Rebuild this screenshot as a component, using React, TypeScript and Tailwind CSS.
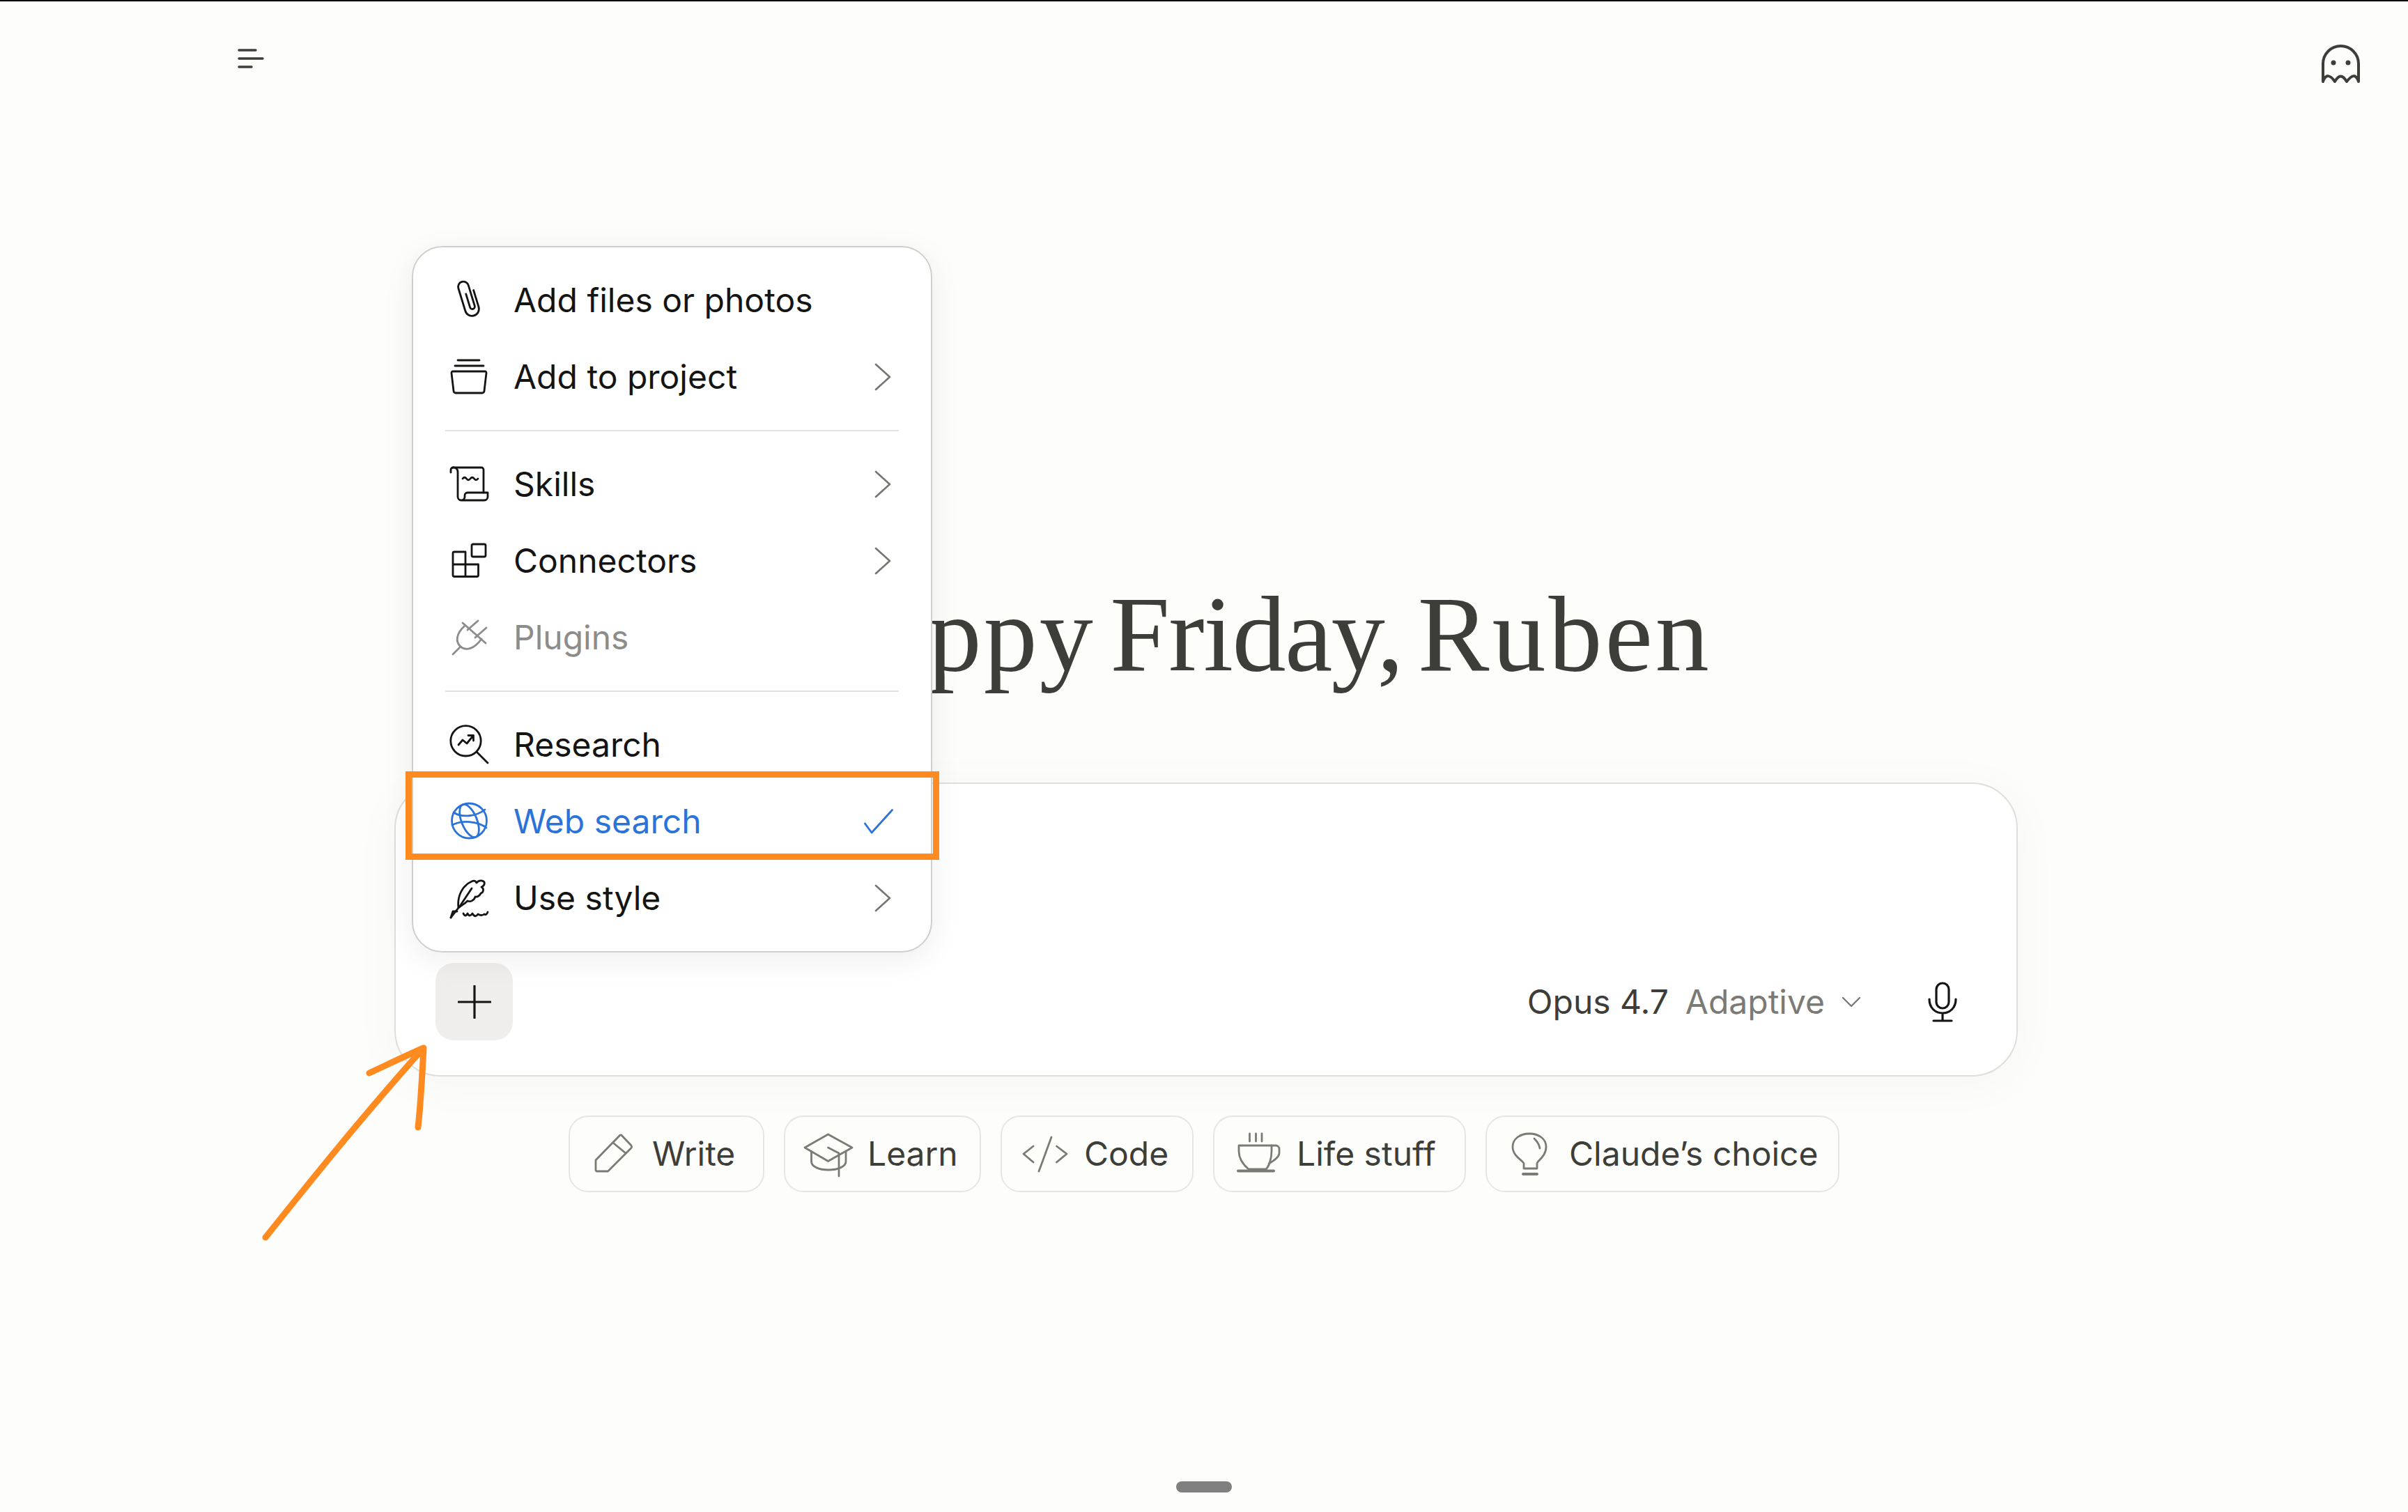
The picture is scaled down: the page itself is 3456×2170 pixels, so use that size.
import type { ReactNode } from 'react'

function Icon({ children, className = 'text-[#141413]' }: { children: ReactNode; className?: string }) {
  return (
    <svg width="64" height="64" viewBox="0 0 64 64" fill="none" stroke="currentColor" strokeWidth="2.8" strokeLinecap="round" strokeLinejoin="round" className={`shrink-0 overflow-visible ${className}`}>
      {children}
    </svg>
  )
}

function Chevron() {
  return (
    <svg width="24" height="40" viewBox="0 0 24 40" fill="none" stroke="#757572" strokeWidth="2.6" strokeLinecap="round" strokeLinejoin="round" className="shrink-0">
      <path d="M2 2 L22 20 L2 38" />
    </svg>
  )
}

type MenuItem = {
  label: string
  icon: ReactNode
  chevron?: boolean
  disabled?: boolean
}

const groupOne: MenuItem[] = [
  {
    label: 'Add files or photos',
    icon: (
      <g transform="rotate(-17 32 30)">
        <path d="M42 20V45a10 10 0 0 1-20 0V11a7.5 7.5 0 0 1 15 0V42a3.5 3.5 0 0 1-7 0V22" />
      </g>
    ),
  },
  {
    label: 'Add to project',
    chevron: true,
    icon: (
      <>
        <path d="M16 8H47M12 16H53" />
        <path d="M9 24H55a2 2 0 0 1 2 2.3L54 52a3 3 0 0 1-3 3H13a3 3 0 0 1-3-3L7 26.3a2 2 0 0 1 2-2.3Z" />
      </>
    ),
  },
]

const groupTwo: MenuItem[] = [
  {
    label: 'Skills',
    chevron: true,
    icon: (
      <>
        <path d="M6 15V11a3 3 0 0 1 3-3H50a3 3 0 0 1 3 3V44" />
        <path d="M9 8a6 6 0 0 1 7 6V50a5 5 0 0 0 5 5H54a5 5 0 0 0 5-5V44H30a4 4 0 0 0-4 4V50a5 5 0 0 1-5 5" />
        <path d="M23 24q2.8-3.5 5.5 0t5.5 0t5.5 0t5.5 0" />
      </>
    ),
  },
  {
    label: 'Connectors',
    chevron: true,
    icon: (
      <>
        <rect x="36" y="8" width="20" height="18" rx="2" />
        <path d="M9 21a2 2 0 0 1 2-2H27V54.5H11a2 2 0 0 1-2-2ZM9 37H45.5V52.5a2 2 0 0 1-2 2H27" />
      </>
    ),
  },
  {
    label: 'Plugins',
    disabled: true,
    icon: (
      <>
        <path d="M23 11L56 40" />
        <path d="M26 15C14 26 12 38 20 45C28 52 40 48 50 34" />
        <path d="M9 56L20 45M30 21L45 8M41 32L57 18" />
      </>
    ),
  },
]

const groupThree: MenuItem[] = [
  {
    label: 'Research',
    icon: (
      <>
        <circle cx="27.5" cy="26.3" r="21.7" />
        <path d="M43 42L59 58" />
        <path d="M17 32L23 25L29 30L38 19M31 18.5H38.5V26" />
      </>
    ),
  },
]

const chips: { label: string; width: string; icon: ReactNode }[] = [
  {
    label: 'Write',
    width: 'w-[281px]',
    icon: (
      <>
        <path d="M7 41L41.5 5.5a2 2 0 0 1 3.2.5L58 20a3 3 0 0 1 0 3.5L24.5 57H9a2 2 0 0 1-2-2Z" />
        <path d="M33 17L50 31" />
      </>
    ),
  },
  {
    label: 'Learn',
    width: 'w-[283px]',
    icon: (
      <>
        <path d="M31.5 4L66 23L31.5 42.5L-2 23Z" />
        <path d="M7.5 29V43C7.5 50 18 55 32 55S57 50 57 43V29" />
        <path d="M31.5 23L47 31V64" />
      </>
    ),
  },
  {
    label: 'Code',
    width: 'w-[277px]',
    icon: <path d="M15 21L1 32L15 44M48.5 21L63 32L48.5 44M41 8L23 57" />,
  },
  {
    label: 'Life stuff',
    width: 'w-[363px]',
    icon: (
      <>
        <path d="M20.5 3V14M29.5 3V14M38 3V14" />
        <path d="M5 20H52V28C52 40 48 50 44 54H19C12 48 5 40 5 28Z" />
        <path d="M52 20H58a5 5 0 0 1 5 5V31C63 36 55 42 48 46" />
        <path d="M4 56.5H55" strokeWidth="4" />
      </>
    ),
  },
  {
    label: 'Claude’s choice',
    width: 'w-[508px]',
    icon: (
      <>
        <path d="M23 53V46C23 42 7 36 7 22C7 10 18 3 31 3C44 3 55 10 55 22C55 36 42 42 42 46V53Z" />
        <path d="M38 10C42 14 45 18 46 24" />
        <path d="M22 61H42" strokeWidth="4" />
      </>
    ),
  },
]

function MenuRow({ item }: { item: MenuItem }) {
  return (
    <div className={`flex h-[110px] items-center pl-[48px] pr-[57px] ${item.disabled ? 'text-[#8c8c8a]' : 'text-[#141413]'}`}>
      <Icon className={item.disabled ? 'text-[#8c8c8a]' : 'text-[#141413]'}>{item.icon}</Icon>
      <span className="ml-[32px] flex-1 text-[48px] leading-none">{item.label}</span>
      {item.chevron && <Chevron />}
    </div>
  )
}

function Divider() {
  return <div className="mx-[46px] my-[21px] h-[2px] bg-[#e3e3df]" />
}

function PlusMenu() {
  return (
    <div className="absolute bottom-[176px] left-[23px] z-10 w-[747px] rounded-[44px] border-2 border-[#cfcfcb] bg-white py-[21px] shadow-[0_10px_44px_rgba(0,0,0,0.07)]">
      {groupOne.map((item) => <MenuRow key={item.label} item={item} />)}
      <Divider />
      {groupTwo.map((item) => <MenuRow key={item.label} item={item} />)}
      <Divider />
      {groupThree.map((item) => <MenuRow key={item.label} item={item} />)}

      {/* web search is the one that is switched on */}
      <div className="relative flex h-[110px] items-center pl-[48px] pr-[54px] text-[#2b73d9]">
        <Icon className="text-[#2b73d9]">
          <circle cx="32.5" cy="31" r="25" />
          <ellipse cx="32.5" cy="31" rx="11" ry="25" transform="rotate(-22 32.5 31)" />
          <path d="M10 19C22 27 42 25 55 15M8 37C22 30 44 31 57 41" />
        </Icon>
        <span className="ml-[32px] flex-1 text-[48px] leading-none">Web search</span>
        <svg width="42" height="36" viewBox="0 0 42 36" fill="none" stroke="currentColor" strokeWidth="2.8" strokeLinecap="round" strokeLinejoin="round">
          <path d="M1.5 21L11 34L40.5 1.5" />
        </svg>
        <div className="pointer-events-none absolute bottom-0 -left-[11px] -right-[12px] -top-[17px] border-[9px] border-[#ff8a1f]" />
      </div>

      <MenuRow
        item={{
          label: 'Use style',
          chevron: true,
          icon: (
            <>
              <path d="M17 46C15 30 22 14 36 8C40 6 42 8 43 10C46 6 52 6 54 9C55 12 53 15 50 16C54 18 53 24 49 25C48 28 44 31 41 30C40 35 34 38 30 36C26 40 22 42 17 46Z" />
              <path d="M6 60L20 42L36 18" />
              <path d="M6 60L9 51H15M24 54q3 6 6 0q3 6 7 0q4 7 8 1q5 3 9 0q3 2 5-3" />
            </>
          ),
        }}
      />
    </div>
  )
}

function Composer() {
  return (
    <div className="relative ml-[6px] mt-[136px] flex h-[422px] w-[2330px] flex-col justify-end rounded-[66px] border-2 border-[#dededa] bg-white pb-[50px] pl-[57px] pr-[85px] shadow-[0_10px_70px_rgba(0,0,0,0.035)]">
      <PlusMenu />
      <div className="flex items-center">
        <button className="flex h-[111px] w-[111px] items-center justify-center rounded-[26px] bg-[#efeeec]">
          <svg width="48" height="48" viewBox="0 0 48 48" stroke="#141413" strokeWidth="3.2" strokeLinecap="round">
            <path d="M24 1V47M1 24H47" />
          </svg>
        </button>
        <div className="ml-auto flex items-center text-[48px] leading-none">
          <span className="text-[#3d3d3a]">Opus 4.7</span>
          <span className="ml-[24px] text-[#7b7a74]">Adaptive</span>
          <svg width="28" height="16" viewBox="0 0 28 16" fill="none" stroke="#7b7a74" strokeWidth="2.4" strokeLinecap="round" strokeLinejoin="round" className="ml-[24px]">
            <path d="M2 2L14 14L26 2" />
          </svg>
          <svg width="42" height="58" viewBox="0 0 42 58" fill="none" stroke="#141413" strokeWidth="3.2" strokeLinecap="round" strokeLinejoin="round" className="ml-[96px]">
            <rect x="12" y="2" width="18" height="36" rx="9" />
            <path d="M2 25C2 37 10 45 21 45S40 37 40 25M21 45V55M8 56H34" />
          </svg>
        </div>
      </div>
    </div>
  )
}

export default function App() {
  return (
    <div className="relative flex h-[2170px] w-full flex-col overflow-hidden border-t-2 border-black bg-[#fdfdfb] font-['Inter',sans-serif]">
      <header className="flex items-start justify-between pl-[341px] pr-[69px]">
        <svg width="38" height="28" viewBox="0 0 38 28" stroke="#3d3d3a" strokeWidth="3.4" strokeLinecap="round" className="mt-[68px]">
          <path d="M2 2H26M2 14H36M2 26H20" />
        </svg>
        <svg width="55" height="55" viewBox="0 0 55 55" fill="none" stroke="#3d3d3a" strokeWidth="4" strokeLinejoin="round" className="mt-[62px]">
          <path d="M2 53V27.5a25.5 25.5 0 0 1 51 0V53C49 42 44 43 36 53C30 43 25 43 19 53C12 43 6 42 2 53Z" />
          <circle cx="17" cy="26" r="3.5" fill="#3d3d3a" stroke="none" />
          <circle cx="38" cy="26" r="3.5" fill="#3d3d3a" stroke="none" />
        </svg>
      </header>

      <main className="flex flex-col items-center">
        <div className="mt-[714px] flex items-center gap-[27px]">
          {/* spark sits behind the open menu */}
          <svg width="120" height="120" viewBox="0 0 120 120" stroke="#d97757" strokeWidth="12" strokeLinecap="round" className="shrink-0">
            <path d="M60 8V112M8 60H112M23 23L97 97M97 23L23 97" />
          </svg>
          <h1 className="whitespace-nowrap font-['Liberation_Serif',serif] text-[154px] font-normal leading-none text-[#3d3d3a] [word-spacing:-17px]">
            <span className="tracking-[3px]">Happy</span> <span className="tracking-[-1.5px]">Friday,</span> <span className="tracking-[4px]">Ruben</span>
          </h1>
        </div>
        <Composer />
        <div className="mt-[56px] flex gap-[28px]">
          {chips.map((chip) => (
            <div key={chip.label} className={`flex h-[110px] items-center rounded-[28px] border-2 border-[#e6e6e2] bg-[#fdfdfb] pl-[30px] ${chip.width}`}>
              <Icon className="text-[#7b7a74]">{chip.icon}</Icon>
              <span className="ml-[24px] text-[48px] leading-none text-[#3d3d3a]">{chip.label}</span>
            </div>
          ))}
        </div>
      </main>

      <div className="mb-[28px] mt-auto flex justify-center">
        <div className="h-[16px] w-[80px] rounded-full bg-[#808080]" />
      </div>

      {/* hand drawn arrow pointing at the plus button */}
      <svg width="260" height="300" viewBox="0 0 260 300" fill="none" stroke="#ff8a1f" strokeWidth="9" strokeLinecap="round" strokeLinejoin="round" className="absolute left-[370px] top-[1490px] z-20">
        <path d="M11 284C70 210 150 110 238 12M160 48C190 34 215 22 238 12C236 50 234 90 230 126" />
      </svg>
    </div>
  )
}
